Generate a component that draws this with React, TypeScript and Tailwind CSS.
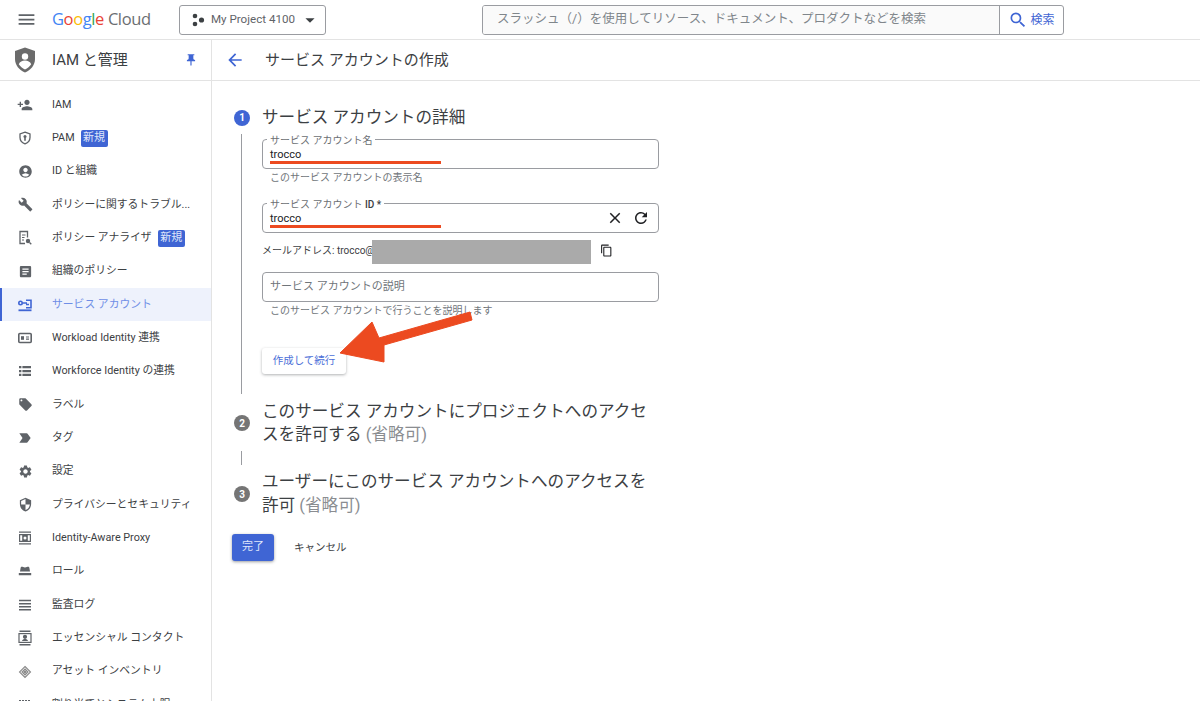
import React from 'react';
import {
  MdMenu, MdArrowDropDown, MdSearch, MdPushPin, MdArrowBack, MdPersonAdd, MdAccountCircle, MdBuild,
  MdArticle, MdLocalOffer, MdLabelImportant, MdSettings, MdSecurity, MdClose, MdRefresh, MdContentCopy,
} from 'react-icons/md';

const HubIcon = () => (
  <svg width="14" height="14" viewBox="0 0 14 14" fill="currentColor">
    <circle cx="4" cy="3" r="2.3" /><circle cx="4" cy="11" r="2.3" /><circle cx="10.5" cy="7" r="2.6" />
  </svg>
);

const PamIcon = () => (
  <svg width="14" height="14" viewBox="0 0 14 14" fill="none" stroke="currentColor" strokeWidth="1.300">
    <path d="M7 1.200l5 1.800v3.600c0 3-2.100 5.200-5 6.200-2.900-1-5-3.200-5-6.200V3z" />
    <circle cx="7" cy="5.600" r="1.500" fill="currentColor" stroke="none" />
    <path d="M7 6.500v3.300" strokeWidth="1.600" />
  </svg>
);

const AnalyzerIcon = () => (
  <svg width="14" height="16" viewBox="0 0 14 16" fill="none" stroke="currentColor" strokeWidth="1.300">
    <path d="M7 13.500H2V1.500h7.500v6" />
    <path d="M4 5h3.500M4 7.500h2.500M4 10h2" strokeWidth="1" />
    <circle cx="10" cy="11" r="2.200" fill="currentColor" stroke="none" />
    <path d="M11.500 12.500l1.800 1.800" />
  </svg>
);

const ServiceAccountIcon = () => (
  <svg width="16" height="16" viewBox="0 0 16 16" fill="none" stroke="currentColor" strokeWidth="1.600">
    <circle cx="3.500" cy="6" r="1.700" />
    <path d="M5.500 6H10M9 3.200h5v7.600H9M9 7.500h3" />
    <path d="M1.500 13.300h13" strokeWidth="1.800" />
  </svg>
);

const WorkloadIcon = () => (
  <svg width="16" height="16" viewBox="0 0 16 16" fill="none" stroke="currentColor" strokeWidth="1.600">
    <rect x="1.800" y="3.500" width="12.400" height="9" rx="1" />
    <rect x="4" y="6.200" width="3" height="3.600" fill="currentColor" stroke="none" />
    <path d="M9 7h3M9 9.200h3" strokeWidth="1.200" />
  </svg>
);

const WorkforceIcon = () => (
  <svg width="14" height="14" viewBox="0 0 14 14" fill="currentColor">
    <path d="M1 2h2.400v2.300H1zM4.400 2H13v2.300H4.400zM1 5.900h2.400v2.300H1zM4.400 5.900H13v2.300H4.400zM1 9.800h2.400v2.300H1zM4.400 9.800H13v2.300H4.400z" />
  </svg>
);

const ProxyIcon = () => (
  <svg width="14" height="16" viewBox="0 0 14 16" fill="currentColor">
    <path d="M1 1.500h12v1.300H1zM1 13.200h12v1.300H1zM1 4h12v8H1zM2.200 5.200v5.600h2V5.200zM9.800 5.200v5.600h2V5.200z" fillRule="evenodd" />
    <circle cx="7" cy="8" r="1.500" fill="#fff" />
  </svg>
);

const HatIcon = () => (
  <svg width="14" height="14" viewBox="0 0 14 14" fill="currentColor">
    <path d="M3.800 2.800c1 0 1.700.6 3.200.6s2.200-.6 3.200-.6c.7 0 1.100.5 1.200 1.200l.6 3.400H2l.6-3.400c.1-.7.5-1.200 1.200-1.200zM.8 9h12.400v2.200H.8z" />
  </svg>
);

const LogIcon = () => (
  <svg width="14" height="14" viewBox="0 0 14 14" fill="currentColor">
    <path d="M1 1.800h12v1.400H1zM1 5h12v1.400H1zM1 8h12v1.400H1zM1 11h12v1.400H1z" />
  </svg>
);

const ContactIcon = () => (
  <svg width="14" height="16" viewBox="0 0 14 16" fill="none" stroke="currentColor" strokeWidth="1.200">
    <path d="M1.500 1.200h11M1.500 14.800h11" strokeWidth="1.400" />
    <rect x="1" y="3.600" width="12" height="8.800" />
    <circle cx="7" cy="6.800" r="1.500" fill="currentColor" />
    <path d="M4 11c.4-1.500 1.600-2 3-2s2.600.5 3 2z" fill="currentColor" stroke="none" />
  </svg>
);

const AssetIcon = () => (
  <svg width="14" height="14" viewBox="0 0 14 14" fill="none" stroke="#8a8a8a" strokeWidth="1.100">
    <path d="M7 1.500L12.500 7 7 12.500 1.500 7zM7 4L10 7 7 10 4 7z" />
    <path d="M7 5.800L8.200 7 7 8.200 5.800 7z" fill="#8a8a8a" />
  </svg>
);

const QuotaIcon = () => (
  <svg width="14" height="14" viewBox="0 0 14 14" fill="currentColor">
    <path d="M1 2h2v2H1zM4 2h2v2H4zM7 2h2v2H7zM10 2h2v2h-2zM1 6h11v2H1z" />
  </svg>
);

const NewBadge = () => (
  <span className="ml-[6px] inline-flex h-[17px] w-[27px] items-center justify-center rounded-[2px] bg-[#3f65d4] text-[11px] text-[#dfe6fa]">新規</span>
);

const navItems: { label: string; icon: React.ReactNode; badge?: boolean; active?: boolean }[] = [
  { label: 'IAM', icon: <MdPersonAdd size={16} /> },
  { label: 'PAM', icon: <PamIcon />, badge: true },
  { label: 'ID と組織', icon: <MdAccountCircle size={15} /> },
  { label: 'ポリシーに関するトラブル...', icon: <MdBuild size={15} /> },
  { label: 'ポリシー アナライザ', icon: <AnalyzerIcon />, badge: true },
  { label: '組織のポリシー', icon: <MdArticle size={15} /> },
  { label: 'サービス アカウント', icon: <ServiceAccountIcon />, active: true },
  { label: 'Workload Identity 連携', icon: <WorkloadIcon /> },
  { label: 'Workforce Identity の連携', icon: <WorkforceIcon /> },
  { label: 'ラベル', icon: <MdLocalOffer size={15} /> },
  { label: 'タグ', icon: <MdLabelImportant size={16} /> },
  { label: '設定', icon: <MdSettings size={15} /> },
  { label: 'プライバシーとセキュリティ', icon: <MdSecurity size={15} /> },
  { label: 'Identity-Aware Proxy', icon: <ProxyIcon /> },
  { label: 'ロール', icon: <HatIcon /> },
  { label: '監査ログ', icon: <LogIcon /> },
  { label: 'エッセンシャル コンタクト', icon: <ContactIcon /> },
  { label: 'アセット インベントリ', icon: <AssetIcon /> },
  { label: '割り当てとシステム上限', icon: <QuotaIcon /> },
];

const Sidebar = () => (
  <aside className="w-[212px] shrink-0 overflow-hidden border-r border-[#e3e3e3]">
    <div className="flex h-[41px] items-center border-b border-[#e3e3e3] pl-[14px] pr-[13px]">
      <svg width="22" height="26" viewBox="0 0 22 26" className="shrink-0">
        <path d="M11 .5l10 3.600v8c0 6.200-4.200 11-10 13.400C5.200 23.100 1 18.300 1 12.100v-8z" fill="#6b6b6b" />
        <circle cx="11" cy="9.500" r="3.200" fill="#fff" />
        <path d="M4.800 17.200c1-2.400 3.400-3.700 6.200-3.700s5.200 1.300 6.200 3.700c-1.400 2.200-3.600 4-6.200 5.200-2.600-1.200-4.800-3-6.200-5.200z" fill="#fff" />
      </svg>
      <span className="ml-[16px] flex-1 text-[15px] text-[#3c4043]">IAM と管理</span>
      <MdPushPin size={14} className="text-[#3f65d4]" />
    </div>
    <nav className="pt-[7px]">
      {navItems.map((item) => (
        <div
          key={item.label}
          className={`flex h-[33.35px] items-center whitespace-nowrap text-[10.8px] ${
            item.active ? 'border-l-2 border-[#3f65d4] bg-[#eef2fc] text-[#6f8ee6]' : 'border-l-2 border-transparent text-[#3c4043]'
          }`}
        >
          <span className={`flex w-[50px] shrink-0 justify-center pr-[4px] ${item.active ? 'text-[#3f65d4]' : 'text-[#5f6368]'}`}>{item.icon}</span>
          <span>{item.label}</span>
          {item.badge && <NewBadge />}
        </div>
      ))}
    </nav>
  </aside>
);

const Field = ({ label, value, children }: { label: React.ReactNode; value: string; children?: React.ReactNode }) => (
  <div className="relative flex h-[30px] w-[397px] items-center rounded-[4px] border border-[#9a9ca1] pl-[7px] pr-[8px]">
    <span className="absolute -top-[6px] left-[4px] bg-white px-[3px] text-[10px] leading-[14px] text-[#6b6e72]">{label}</span>
    <span className="flex-1 pt-[2px] text-[11px] text-[#202124]">{value}</span>
    {children}
    <span className="absolute left-[7px] top-[21px] h-[3px] w-[171px] bg-[#ec4a20]" />
  </div>
);

const StepCircle = ({ n, active }: { n: number; active?: boolean }) => (
  <span className={`flex h-[16px] w-[16px] shrink-0 items-center justify-center rounded-full text-[10px] font-bold text-white ${active ? 'bg-[#3f65d4]' : 'bg-[#757575]'}`}>{n}</span>
);

export default function App() {
  return (
    <div className="relative flex h-[701px] w-[1200px] flex-col overflow-hidden bg-white" style={{ fontFamily: 'Roboto, "Noto Sans CJK JP", sans-serif' }}>
      <header className="flex h-[40px] shrink-0 items-center border-b border-[#e3e3e3]">
        <MdMenu size={21} className="ml-[16px] text-[#5f6368]" />
        <div className="ml-[15px] flex w-[111px] items-baseline whitespace-nowrap text-[16.5px] tracking-[-0.4px]" style={{ fontFamily: '"Open Sans", sans-serif' }}>
          <span className="text-[#4285f4]">G</span><span className="text-[#ea4335]">o</span><span className="text-[#fbbc04]">o</span><span className="text-[#4285f4]">g</span><span className="text-[#34a853]">l</span><span className="text-[#ea4335]">e</span>
          <span className="ml-[4px] text-[#6b6e72]">Cloud</span>
        </div>
        <button className="ml-[16px] flex h-[30px] w-[147px] items-center rounded-[3px] border border-[#9a9ca1] pl-[11px] text-[11.6px] text-[#5f6368]">
          <span className="text-[#3c4043]"><HubIcon /></span>
          <span className="ml-[6px]">My Project 4100</span>
          <MdArrowDropDown size={22} className="ml-[4px] text-[#3c4043]" />
        </button>
        <div className="ml-[156px] flex h-[30px] w-[582px] overflow-hidden rounded-[3px] border border-[#9a9ca1]">
          <div className="flex flex-1 items-center bg-[#fafafa] pl-[14px] text-[12.5px] text-[#80868b]">スラッシュ（/）を使用してリソース、ドキュメント、プロダクトなどを検索</div>
          <div className="flex w-[64px] items-center justify-center gap-[2px] border-l border-[#9a9ca1] text-[12px] text-[#3f65d4]">
            <MdSearch size={20} /><span>検索</span>
          </div>
        </div>
      </header>
      <div className="flex min-h-0 flex-1">
        <Sidebar />
        <main className="relative min-w-0 flex-1">
          <div className="flex h-[41px] items-center border-b border-[#e3e3e3] pl-[13px]">
            <MdArrowBack size={20} className="text-[#3f65d4]" />
            <h1 className="ml-[20px] text-[15px] text-[#3c4043]">サービス アカウントの作成</h1>
          </div>

          <div className="pl-[20px] pt-[25px]">
            {/* step 1 */}
            <div className="flex h-[23px] items-center gap-[12px] pl-[2px]">
              <StepCircle n={1} active />
              <h2 className="pt-[2px] text-[16.6px] text-[#3c4043]">サービス アカウントの詳細</h2>
            </div>
            <div className="ml-[9px] mt-[5px] flex h-[260px] flex-col border-l border-[#9a9ca1] pl-[20px] pt-[5px]">
              <Field label="サービス アカウント名" value="trocco" />
              <p className="mt-[1px] pl-[8px] pt-[1px] text-[10px] leading-[14px] text-[#70757a]">このサービス アカウントの表示名</p>
              <div className="mt-[18px]">
                <Field label={<>サービス アカウント <b className="font-medium text-[#3c4043]">ID *</b></>} value="trocco">
                  <MdClose size={18} className="mr-[8px] text-[#202124]" />
                  <MdRefresh size={18} className="text-[#202124]" />
                </Field>
              </div>
              <div className="relative mt-[7px] flex h-[24px] items-center text-[10px] text-[#3c4043]">
                <span className="pb-[3px]">メールアドレス: trocco@</span>
                <span className="absolute left-[110px] top-0 h-[24px] w-[219px] bg-[#aaaaaa]" />
                <MdContentCopy size={13} className="absolute left-[338px] top-[4px] text-[#202124]" />
              </div>
              <div className="mt-[8px] flex h-[30px] w-[397px] items-center rounded-[4px] border border-[#9a9ca1] pl-[7px] text-[11px] text-[#70757a]">サービス アカウントの説明</div>
              <p className="mt-[1px] pl-[8px] pt-[1px] text-[10px] leading-[14px] text-[#70757a]">このサービス アカウントで行うことを説明します</p>
              <button className="mt-[30px] h-[26px] w-[84px] rounded-[3px] bg-white text-[10.5px] text-[#4c6fd8] shadow-[0_1px_3px_rgba(60,64,67,0.4)]">作成して続行</button>
            </div>

            {/* step 2 */}
            <div className="mt-[6px] flex items-center gap-[12px] pl-[2px]">
              <StepCircle n={2} />
              <h2 className="w-[397px] text-[16.6px] leading-[23px] text-[#3c4043]">このサービス アカウントにプロジェクトへのアクセスを許可する <span className="text-[#8a8d91]">(省略可)</span></h2>
            </div>
            <div className="ml-[9px] mt-[5px] h-[14px] border-l border-[#9a9ca1]" />
            <div className="mt-[5px] flex items-center gap-[12px] pl-[2px]">
              <StepCircle n={3} />
              <h2 className="w-[397px] text-[16.6px] leading-[24px] text-[#3c4043]">ユーザーにこのサービス アカウントへのアクセスを許可 <span className="text-[#8a8d91]">(省略可)</span></h2>
            </div>

            <div className="mt-[16px] flex items-center">
              <button className="h-[27px] w-[42px] rounded-[3px] bg-[#3f65d4] text-[11px] text-[#dfe6fa] shadow-[0_1px_3px_rgba(60,64,67,0.5)]">完了</button>
              <span className="ml-[20px] text-[10.5px] text-[#3c4043]">キャンセル</span>
            </div>
          </div>

          {/* annotation arrow */}
          <svg width="140" height="60" viewBox="0 0 140 60" className="absolute left-[125px] top-[271px]">
            <path d="M3 42L35 11 42 27 133 1 135 9 47 34 47 51z" fill="#ec4a20" stroke="#ec4a20" strokeWidth="1" strokeLinejoin="round" />
          </svg>
        </main>
      </div>
    </div>
  );
}
